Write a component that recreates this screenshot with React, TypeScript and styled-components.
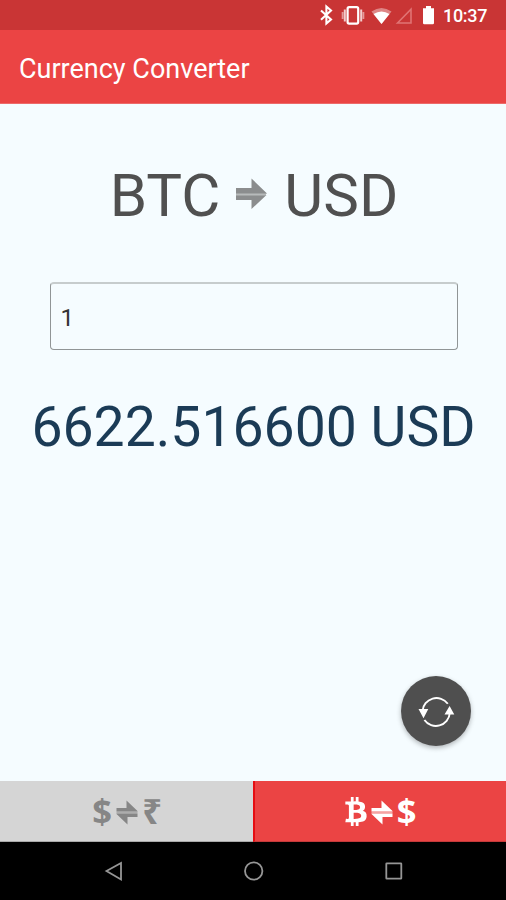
import React, { useState } from "react";
import styled, { createGlobalStyle } from "styled-components";
import { FaBtc } from "react-icons/fa";

const GlobalStyle = createGlobalStyle`
  *, *::before, *::after { box-sizing: border-box; }
  body { margin: 0; font-family: Roboto, sans-serif; background: #f5fcff; }
`;

const Screen = styled.div`
  width: 506px;
  height: 900px;
  display: flex;
  flex-direction: column;
  background: #f5fcff;
  overflow: hidden;
`;

const StatusBar = styled.div`
  height: 30px;
  flex: none;
  display: flex;
  justify-content: flex-end;
  background: #c93535;
  color: #fff;
`;

const StatusIcons = styled.svg`
  display: block;
  width: 124px;
  height: 30px;
`;

const Clock = styled.span`
  width: 63px;
  font-size: 18px;
  line-height: 32px;
  font-weight: 500;
  letter-spacing: -0.3px;
`;

const AppBar = styled.header`
  height: 74px;
  flex: none;
  display: flex;
  align-items: center;
  padding: 5px 0 0 19px;
  background: #eb4444;
  border-bottom: 1px solid #ed6a6a;
`;

const Title = styled.h1`
  margin: 0;
  color: #fff;
  font-size: 27px;
  line-height: 32px;
  font-weight: 400;
`;

const Content = styled.main`
  position: relative;
  flex: 1;
  display: flex;
  flex-direction: column;
  align-items: center;
`;

const Pair = styled.div`
  height: 70px;
  margin: 57px 0 0 2px;
  display: flex;
  align-items: center;
  color: #505050;
  font-size: 60px;
  line-height: 70px;
`;

const PairArrow = styled.svg`
  width: 31px;
  height: 32px;
  margin: 0 17px 4px 16px;
`;

const Amount = styled.input`
  width: 408px;
  height: 68px;
  margin: 51px 0 0 1px;
  padding: 2px 0 0 10px;
  border: 1px solid #909596;
  border-top: 2px solid #c6cccd;
  border-radius: 4px;
  outline: none;
  background: transparent;
  color: #333;
  font-family: Roboto, sans-serif;
  font-size: 24px;
`;

const Result = styled.div`
  margin: 45px 0 0 1px;
  color: #1b3b56;
  font-size: 55.3px;
  line-height: 66px;
  white-space: nowrap;
`;

const RefreshButton = styled.button`
  position: absolute;
  right: 35px;
  bottom: 35px;
  width: 70px;
  height: 70px;
  padding: 0;
  border: 0;
  border-radius: 50%;
  background: #4f4f4f;
  box-shadow: 0 2px 5px rgba(0, 0, 0, 0.28);
`;

const RefreshGlyph = styled.svg`
  display: block;
  width: 70px;
  height: 70px;
`;

const Tabs = styled.nav`
  height: 61px;
  flex: none;
  display: grid;
  grid-template-columns: 253px 253px;
`;

const Tab = styled.button<{ $active?: boolean }>`
  display: flex;
  align-items: center;
  justify-content: center;
  padding: 0 0 0 1px;
  border: 0;
  border-left: ${(p) => (p.$active ? "2px solid #e60d12" : "0")};
  border-bottom: 1px solid ${(p) => (p.$active ? "#c43a3a" : "#a9a9a9")};
  background: ${(p) => (p.$active ? "#eb4444" : "#d5d5d5")};
  color: ${(p) => (p.$active ? "#fff" : "#868686")};
`;

const CurrencySign = styled.span`
  width: 20px;
  display: flex;
  justify-content: center;
  font-family: "Noto Sans", sans-serif;
  font-weight: 700;
  font-size: 34.5px;
  line-height: 48px;
`;

const BitcoinSign = styled(FaBtc)`
  width: 22px;
  height: 29px;
  margin-left: -1px;
`;

const SwapGlyph = styled.svg`
  width: 22px;
  height: 25px;
  margin: 2px 4px 0;
`;

const SystemNav = styled.div`
  height: 58px;
  flex: none;
  background: #000;
`;

const NavGlyphs = styled.svg`
  display: block;
  width: 506px;
  height: 58px;
`;

function Swap() {
  return (
    <SwapGlyph viewBox="0 0 22 25" fill="currentColor">
      <path d="M0.5 8H10.5V0.5L21.5 11V11.6H0.5Z" />
      <path d="M0.5 13.4H21.5V17H11.5V24.5L0.5 14Z" />
      <path d="M0.5 11.6h21v1.8h-21z" opacity="0.5" />
    </SwapGlyph>
  );
}

export default function App() {
  const [amount, setAmount] = useState("1");
  const result = (Number(amount) || 0) * 6622.5166;

  return (
    <>
      <GlobalStyle />
      <Screen>
        <StatusBar>
          <StatusIcons viewBox="319 0 124 30" fill="none">
            <path d="M321 10.5L331 19.5L326.4 23.5V6.5L331 10.5L321 19.7" stroke="#fff" strokeWidth="2.1" />
            <rect x="347.6" y="7.2" width="10.6" height="16.4" rx="1.5" stroke="#fff" strokeWidth="2.2" />
            <path d="M344.8 9.5v12M361.2 9.5v12" stroke="#fff" strokeOpacity="0.75" strokeWidth="2" />
            <path d="M342.6 12v7M363.4 12v7" stroke="#fff" strokeOpacity="0.5" strokeWidth="1.8" />
            <path d="M371.5 11.5Q381.5 4.5 391.5 11.5L381.5 24Z" fill="#fff" fillOpacity="0.4" />
            <path d="M373.5 14Q381.5 9 389.5 14L381.5 24Z" fill="#fff" />
            <path d="M397.5 23L411 9.3V23Z" stroke="#e07474" strokeWidth="1.6" />
            <path d="M423 8.2h3V6h5v2.2h3V23q0 1.3-1.3 1.3h-8.4q-1.3 0-1.3-1.3Z" fill="#fff" />
          </StatusIcons>
          <Clock>10:37</Clock>
        </StatusBar>
        <AppBar>
          <Title>Currency Converter</Title>
        </AppBar>
        <Content>
          <Pair>
            <span>BTC</span>
            <PairArrow viewBox="0 0 31 32" fill="#8b8d8e">
              <path d="M0 10H15.5V0.5L30.5 15V16H0Z" />
              <path d="M0 17H30.5L15.5 31V22H0Z" />
              <path d="M0 15.5h30v2H0z" fill="#b7babb" />
            </PairArrow>
            <span>USD</span>
          </Pair>
          <Amount value={amount} onChange={(e) => setAmount(e.target.value)} />
          <Result>{result.toFixed(6)} USD</Result>
          <RefreshButton aria-label="Refresh rates">
            <RefreshGlyph viewBox="0 0 70 70" fill="none">
              <path d="M21.5 35A14 14 0 0 1 46.8 27.8M48.8 37A14 14 0 0 1 23.4 44" stroke="#fff" strokeWidth="1.9" />
              <path d="M17.5 33H27.3L22.5 42.3ZM43.5 38.5H53.3L48.6 30Z" fill="#fff" />
            </RefreshGlyph>
          </RefreshButton>
        </Content>
        <Tabs>
          <Tab>
            <CurrencySign>$</CurrencySign>
            <Swap />
            <CurrencySign>₹</CurrencySign>
          </Tab>
          <Tab $active>
            <BitcoinSign />
            <Swap />
            <CurrencySign>$</CurrencySign>
          </Tab>
        </Tabs>
        <SystemNav>
          <NavGlyphs viewBox="0 842 506 58" fill="none" stroke="#969696" strokeWidth="1.8">
            <path d="M106.5 871L121 863V879.5Z" />
            <circle cx="253.7" cy="871" r="8.7" />
            <rect x="386.3" y="863.3" width="15" height="15.4" rx="0.5" />
          </NavGlyphs>
        </SystemNav>
      </Screen>
    </>
  );
}
